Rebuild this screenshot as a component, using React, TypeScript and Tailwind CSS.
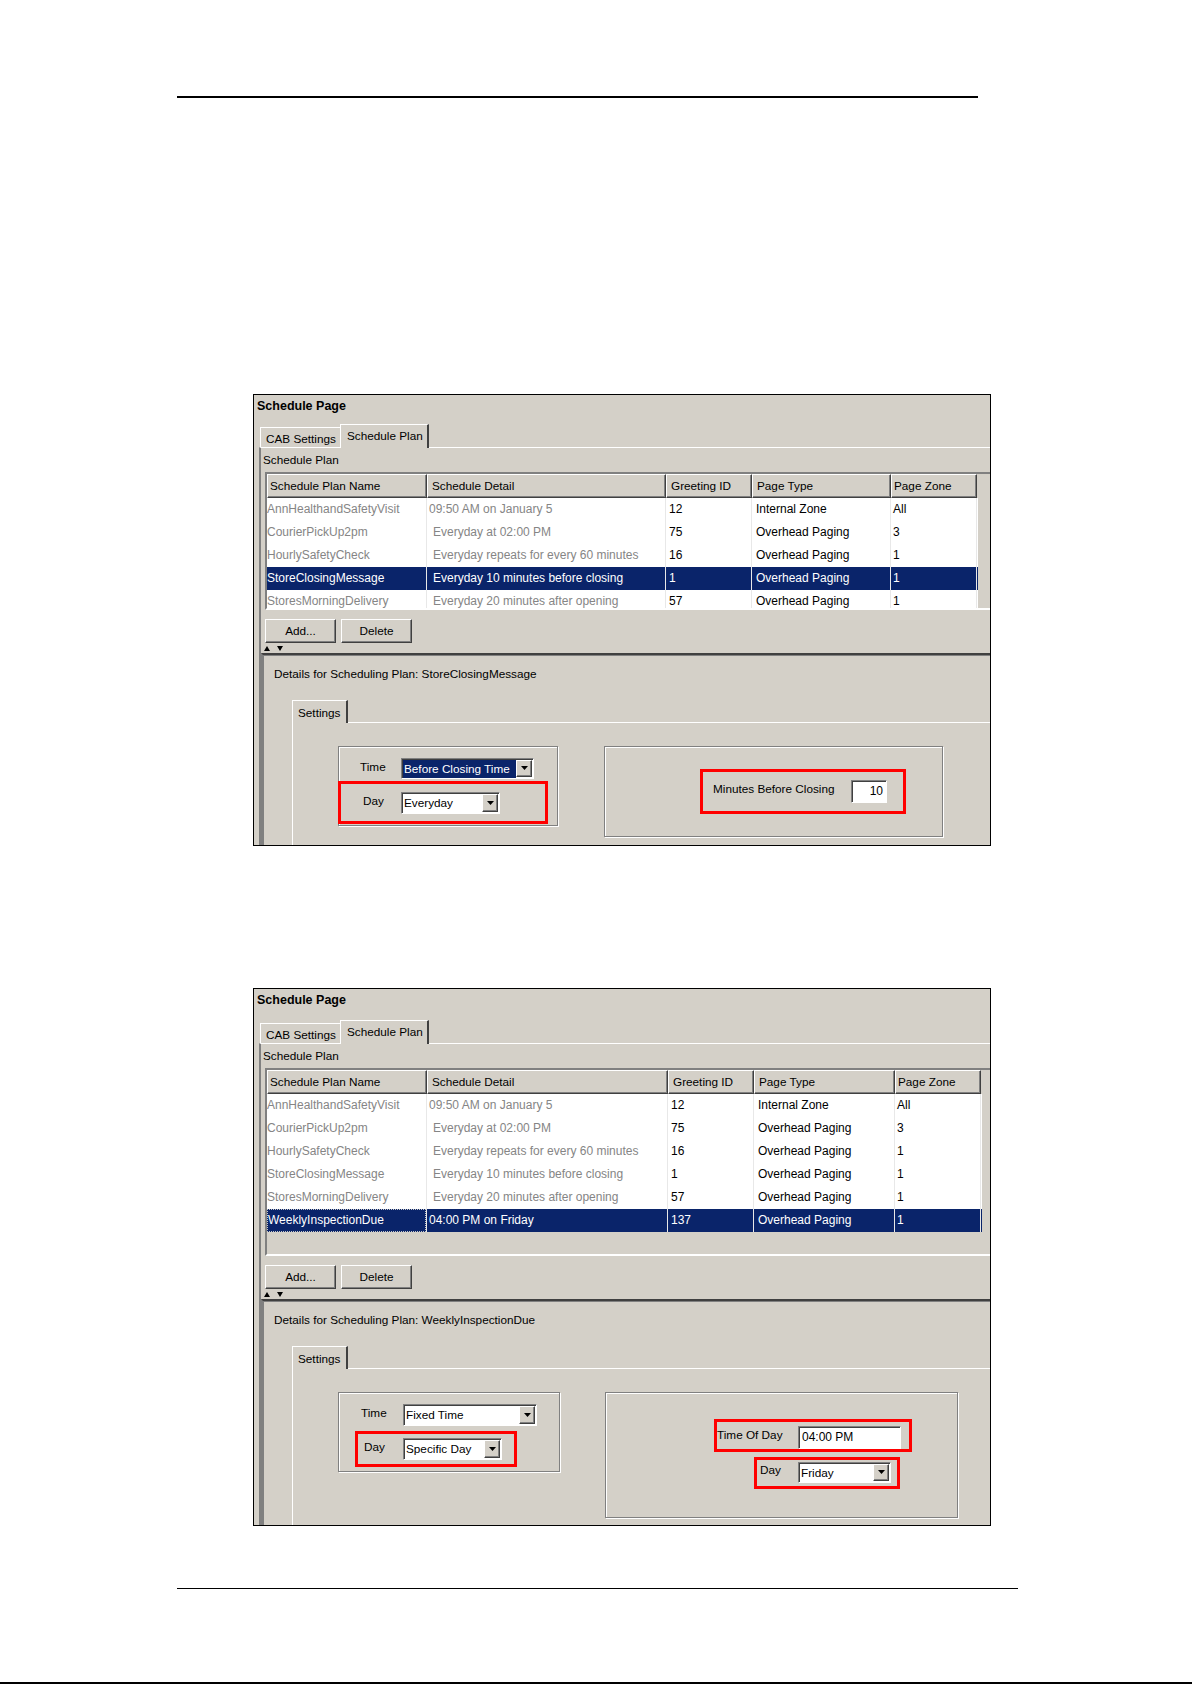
import React from 'react';

type Row = { name: string; detail: string; dpad: boolean; gid: string; type: string; zone: string; sel?: boolean; focus?: boolean };

const raised = 'border border-t-white border-l-white border-b-[#404040] border-r-[#404040] shadow-[inset_-1px_-1px_0_#808080]';
const sunken = 'border border-t-[#808080] border-l-[#808080] border-b-white border-r-white shadow-[inset_1px_1px_0_#404040]';
const etched = 'border border-[#808080] shadow-[inset_1px_1px_0_#ffffff,1px_1px_0_#ffffff]';

function Arrow() {
  return (
    <svg width="7" height="4" viewBox="0 0 7 4" className="block">
      <path d="M0 0 H7 L3.5 4 Z" fill="#000" />
    </svg>
  );
}

function Combo({ cls, text, focused }: { cls: string; text: string; focused?: boolean }) {
  return (
    <div className={`flex bg-white ${sunken} ${cls}`}>
      <div className="flex-1 flex items-center pl-[1px] pt-[1px] overflow-hidden">
        <div className={`h-full flex items-center whitespace-nowrap pl-[1px] pr-[3px] ${focused ? 'bg-[#0a246a] text-white w-full' : ''}`}>{text}</div>
      </div>
      <div className={`w-[16px] mt-[1px] mr-[1px] mb-[1px] bg-[#d4d0c8] flex items-center justify-center ${raised}`}>
        <Arrow />
      </div>
    </div>
  );
}

function Field({ cls, text, right }: { cls: string; text: string; right?: boolean }) {
  return (
    <div className={`flex items-center bg-white ${sunken} ${cls} ${right ? 'justify-end pr-[3px]' : 'pl-[3px]'}`}>
      <span className="whitespace-nowrap">{text}</span>
    </div>
  );
}

function Table({ widths, rows, bodyH }: { widths: string[]; rows: Row[]; bodyH: string }) {
  const heads = ['Schedule Plan Name', 'Schedule Detail', 'Greeting ID', 'Page Type', 'Page Zone'];
  const hp = ['pl-[2px]', 'pl-[4px]', 'pl-[4px]', 'pl-[4px]', 'pl-[2px]'];
  return (
    <div className="ml-[4px] w-[740px] border-2 border-t-[#808080] border-l-[#808080] border-b-white border-r-white">
      <div className="flex h-[24px]">
        {heads.map((h, i) => (
          <div key={h} className={`${widths[i]} shrink-0 h-full flex items-center bg-[#d4d0c8] ${raised} ${hp[i]}`}>
            <span className="whitespace-nowrap">{h}</span>
          </div>
        ))}
      </div>
      <div className={`${bodyH} overflow-hidden bg-[#d4d0c8] text-[12px]`}>
        {rows.map((r) => {
          const base = r.sel ? 'bg-[#0a246a] text-white' : 'bg-white';
          const gray = r.sel ? '' : 'text-[#858585]';
          return (
            <div key={r.name} className="flex h-[23px]">
              <div className={`${widths[0]} shrink-0 ${base} ${gray} border-r border-[#e8e8e8] flex items-center`}>
                <span className={`whitespace-nowrap h-full flex items-center ${r.focus ? 'w-full border border-dotted border-[#c8c8c8]' : ''}`}>{r.name}</span>
              </div>
              <div className={`${widths[1]} shrink-0 ${base} ${gray} border-r border-[#e8e8e8] flex items-center ${r.dpad ? 'pl-[6px]' : 'pl-[2px]'}`}>
                <span className="whitespace-nowrap">{r.detail}</span>
              </div>
              <div className={`${widths[2]} shrink-0 ${base} border-r border-[#e8e8e8] flex items-center pl-[3px]`}>{r.gid}</div>
              <div className={`${widths[3]} shrink-0 ${base} border-r border-[#e8e8e8] flex items-center pl-[4px]`}>
                <span className="whitespace-nowrap">{r.type}</span>
              </div>
              <div className={`${widths[4]} shrink-0 ${base} border-r border-[#e8e8e8] flex items-center pl-[2px]`}>{r.zone}</div>
              <div className={`w-[1px] shrink-0 ${base}`} />
            </div>
          );
        })}
      </div>
    </div>
  );
}

function Button({ children }: { children: React.ReactNode }) {
  return <div className={`w-[71px] h-[24px] bg-[#d4d0c8] flex items-center justify-center ${raised}`}>{children}</div>;
}

function WindowFrame({
  cls,
  titleCls,
  widths,
  rows,
  bodyH,
  planName,
  left,
  right,
  gap,
}: {
  cls: string;
  titleCls: string;
  widths: string[];
  rows: Row[];
  bodyH: string;
  planName: string;
  left: React.ReactNode;
  right: React.ReactNode;
  gap: string;
}) {
  return (
    <div className={`ml-[253px] w-[738px] border border-black bg-[#d4d0c8] overflow-hidden ${cls}`}>
      <div className={`pl-[3px] pt-[4px] font-bold text-[12.5px] leading-[14px] ${titleCls}`}>Schedule Page</div>
      {/* tab strip */}
      <div className="flex items-end h-[23px] pl-[6px]">
        <div className="w-[80px] h-[20px] border-t border-l border-white pl-[5px] pt-[4px] leading-[14px] whitespace-nowrap">CAB Settings</div>
        <div className="relative z-10 w-[89px] h-[24px] -mb-[1px] bg-[#d4d0c8] border-t border-l border-white border-r-2 border-r-[#404040] pl-[6px] pt-[4px] leading-[14px] whitespace-nowrap">Schedule Plan</div>
      </div>
      {/* tab pane */}
      <div className="ml-[5px] border-t border-t-white border-l-2 border-l-[#808080]">
        <div className="h-[24px] pl-[2px] pt-[5px] leading-[14px]">Schedule Plan</div>
        <Table widths={widths} rows={rows} bodyH={bodyH} />
        <div className="ml-[4px] mt-[9px] flex gap-[5px]">
          <Button>Add...</Button>
          <Button>Delete</Button>
        </div>
        <div className="h-[10px] flex items-end gap-[7px] pl-[3px] pb-[2px]">
          <svg width="6" height="5" viewBox="0 0 6 5" className="block"><path d="M0 5 L3 0 L6 5 Z" fill="#000" /></svg>
          <svg width="6" height="5" viewBox="0 0 6 5" className="block"><path d="M0 0 H6 L3 5 Z" fill="#000" /></svg>
        </div>
        {/* details panel */}
        <div className="border-t-2 border-t-[#404040] border-l-2 border-l-[#808080] shadow-[inset_1px_1px_0_#808080]">
          <div className="h-[45px] pl-[11px] pt-[12px] leading-[14px] whitespace-nowrap">Details for Scheduling Plan: {planName}</div>
          <div className="ml-[29px]">
            <div className="relative z-10 w-[56px] h-[23px] -mb-[1px] bg-[#d4d0c8] border-t border-l border-white border-r-2 border-r-[#404040] pl-[5px] pt-[5px] leading-[14px]">Settings</div>
            <div className="border-t border-l border-white pt-[23px] pl-[45px] pb-[20px]">
              <div className={`flex items-start ${gap}`}>
                {left}
                {right}
              </div>
            </div>
          </div>
        </div>
      </div>
    </div>
  );
}

const rows1: Row[] = [
  { name: 'AnnHealthandSafetyVisit', detail: '09:50 AM on January 5', dpad: false, gid: '12', type: 'Internal Zone', zone: 'All' },
  { name: 'CourierPickUp2pm', detail: 'Everyday at 02:00 PM', dpad: true, gid: '75', type: 'Overhead Paging', zone: '3' },
  { name: 'HourlySafetyCheck', detail: 'Everyday repeats for every 60 minutes', dpad: true, gid: '16', type: 'Overhead Paging', zone: '1' },
  { name: 'StoreClosingMessage', detail: 'Everyday 10 minutes before closing', dpad: true, gid: '1', type: 'Overhead Paging', zone: '1', sel: true },
  { name: 'StoresMorningDelivery', detail: 'Everyday 20 minutes after opening', dpad: true, gid: '57', type: 'Overhead Paging', zone: '1' },
];

const rows2: Row[] = [
  { name: 'AnnHealthandSafetyVisit', detail: '09:50 AM on January 5', dpad: false, gid: '12', type: 'Internal Zone', zone: 'All' },
  { name: 'CourierPickUp2pm', detail: 'Everyday at 02:00 PM', dpad: true, gid: '75', type: 'Overhead Paging', zone: '3' },
  { name: 'HourlySafetyCheck', detail: 'Everyday repeats for every 60 minutes', dpad: true, gid: '16', type: 'Overhead Paging', zone: '1' },
  { name: 'StoreClosingMessage', detail: 'Everyday 10 minutes before closing', dpad: true, gid: '1', type: 'Overhead Paging', zone: '1' },
  { name: 'StoresMorningDelivery', detail: 'Everyday 20 minutes after opening', dpad: true, gid: '57', type: 'Overhead Paging', zone: '1' },
  { name: 'WeeklyInspectionDue', detail: '04:00 PM on Friday', dpad: false, gid: '137', type: 'Overhead Paging', zone: '1', sel: true, focus: true },
];

export default function App() {
  return (
    <div className="w-[1192px] min-h-[1685px] bg-white font-['Liberation_Sans',Arial,sans-serif] text-[11.75px] text-black">
      <div className="h-[96px]" />
      <div className="ml-[177px] w-[801px] h-[1.5px] bg-black" />

      <div className="h-[296px]" />
      <WindowFrame
        cls="h-[452px]"
        titleCls="h-[29px]"
        widths={['w-[160px]', 'w-[239px]', 'w-[86px]', 'w-[139px]', 'w-[86px]']}
        rows={rows1}
        bodyH="h-[110px]"
        planName="StoreClosingMessage"
        gap="gap-[46px]"
        left={
          <div className={`w-[220px] h-[80px] ${etched}`}>
            <div className="flex items-start">
              <div className="w-[62px] pl-[21px] mt-[13px] leading-[14px]">Time</div>
              <Combo cls="mt-[11px] w-[133px] h-[21px]" text="Before Closing Time" focused />
            </div>
            <div className="-ml-[1px] mt-[2px] w-[210px] h-[43px] border-[3px] border-[#ff0000] flex items-start">
              <div className="w-[60px] pl-[22px] mt-[10px] leading-[14px]">Day</div>
              <Combo cls="mt-[8px] w-[99px] h-[22px]" text="Everyday" />
            </div>
          </div>
        }
        right={
          <div className={`w-[339px] h-[91px] ${etched} pt-[22px] pl-[95px]`}>
            <div className="w-[206px] h-[45px] border-[3px] border-[#ff0000] flex items-start">
              <div className="w-[148px] pl-[10px] mt-[10px] leading-[14px] whitespace-nowrap">Minutes Before Closing</div>
              <Field cls="mt-[8px] w-[36px] h-[23px] text-[12px]" text="10" right />
            </div>
          </div>
        }
      />

      <div className="h-[142px]" />
      <WindowFrame
        cls="h-[538px]"
        titleCls="h-[31px]"
        widths={['w-[160px]', 'w-[241px]', 'w-[86px]', 'w-[141px]', 'w-[86px]']}
        rows={rows2}
        bodyH="h-[160px]"
        planName="WeeklyInspectionDue"
        gap="gap-[45px]"
        left={
          <div className={`w-[222px] h-[80px] ${etched}`}>
            <div className="flex items-start">
              <div className="w-[64px] pl-[22px] mt-[13px] leading-[14px]">Time</div>
              <Combo cls="mt-[11px] w-[134px] h-[22px]" text="Fixed Time" />
            </div>
            <div className="ml-[16px] mt-[5px] w-[162px] h-[36px] border-[3px] border-[#ff0000] flex items-start">
              <div className="w-[45px] pl-[6px] mt-[6px] leading-[14px]">Day</div>
              <Combo cls="mt-[4px] w-[99px] h-[22px]" text="Specific Day" />
            </div>
          </div>
        }
        right={
          <div className={`w-[353px] h-[126px] ${etched} pt-[26px] pl-[108px]`}>
            <div className="w-[198px] h-[33px] border-[3px] border-[#ff0000] flex items-start">
              <div className="w-[81px] mt-[6px] leading-[14px] whitespace-nowrap">Time Of Day</div>
              <Field cls="mt-[4px] w-[103px] h-[23px] text-[12px]" text="04:00 PM" />
            </div>
            <div className="ml-[40px] mt-[5px] w-[146px] h-[32px] border-[3px] border-[#ff0000] flex items-start">
              <div className="w-[41px] pl-[3px] mt-[3px] leading-[14px]">Day</div>
              <Combo cls="mt-[2px] w-[93px] h-[21px]" text="Friday" />
            </div>
          </div>
        }
      />

      <div className="h-[62px]" />
      <div className="ml-[177px] w-[841px] h-[1.5px] bg-black" />
      <div className="h-[93px]" />
      <div className="w-[1192px] h-[2px] bg-black" />
    </div>
  );
}
